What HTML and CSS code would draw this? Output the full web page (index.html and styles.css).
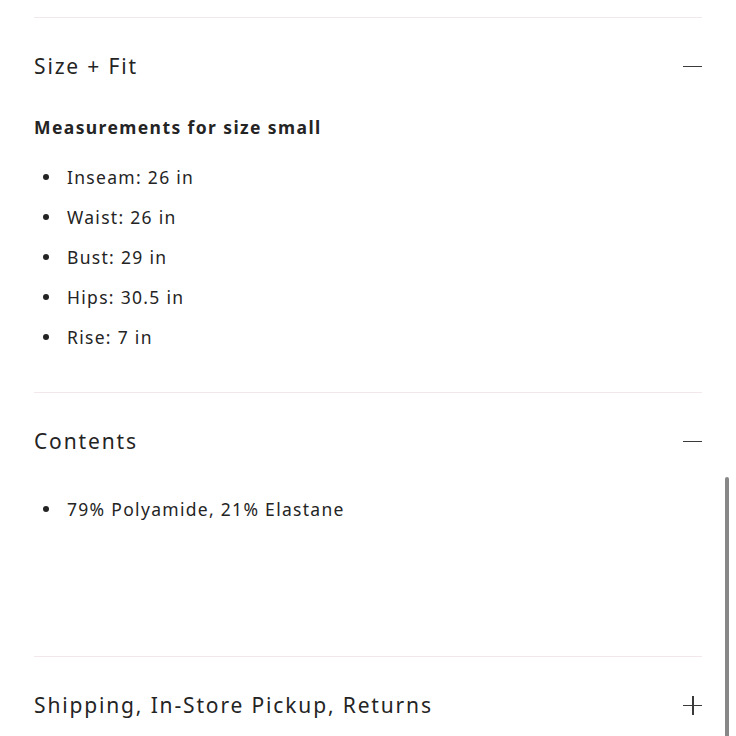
FILE: index.html
```html
<!DOCTYPE html>
<html lang="en">

<head>
  <meta charset="UTF-8" />
  <meta name="viewport" content="width=device-width, initial-scale=1.0" />
  <title>Product details</title>
  <link rel="stylesheet" href="styles.css">
</head>

<body>

  <div class="details">

    <div class="section open">
      <div class="section-head">
        <h2>Size + Fit</h2>
        <span class="toggle minus"></span>
      </div>
      <div class="section-body">
        <h3>Measurements for size small</h3>
        <ul class="specs">
          <li>Inseam: 26 in</li>
          <li>Waist: 26 in</li>
          <li>Bust: 29 in</li>
          <li>Hips: 30.5 in</li>
          <li>Rise: 7 in</li>
        </ul>
      </div>
    </div>

    <div class="section open contents">
      <div class="section-head">
        <h2>Contents</h2>
        <span class="toggle minus"></span>
      </div>
      <div class="section-body">
        <ul class="specs">
          <li>79% Polyamide, 21% Elastane</li>
        </ul>
      </div>
    </div>

    <div class="section">
      <div class="section-head">
        <h2>Shipping, In-Store Pickup, Returns</h2>
        <span class="toggle plus"></span>
      </div>
    </div>

  </div>

  <div class="scrollbar"></div>

</body>

</html>
```

FILE: styles.css
```css
:root {
  --text: #242424;
  --rule: #f2e8ea;
  --icon: #3a3a3a;
}

body {
  margin: 0;
  font-family: 'Noto Sans', sans-serif;
  color: var(--text);
  background: #fff;
  overflow: hidden;
  height: 736px;
}

.details {
  padding: 17px 34px 0;
}

.section {
  border-top: 1px solid var(--rule);
}

.section-head {
  display: flex;
  align-items: center;
  justify-content: space-between;
  padding: 33px 0;
}

.section-head h2 {
  margin: 0;
  font-size: 21px;
  font-weight: 400;
  line-height: 30px;
  letter-spacing: 1.85px;
}

.toggle {
  position: relative;
  width: 19px;
  height: 19px;
}

.toggle::before,
.toggle::after {
  content: "";
  position: absolute;
  background: var(--icon);
}

.toggle::before {
  left: 0;
  right: 0;
  top: 9px;
  height: 1.5px;
}

.toggle.plus::after {
  top: 0;
  bottom: 0;
  left: 9px;
  width: 1.5px;
}

.section-body {
  padding-bottom: 35px;
}

.contents .section-body {
  padding-bottom: 127px;
}

.section-body h3 {
  margin: 0;
  font-size: 17.5px;
  font-weight: 700;
  line-height: 26px;
  letter-spacing: 1.4px;
}

.specs {
  list-style: none;
  margin: 17px 0 0;
  padding: 0;
}

.contents .specs {
  margin-top: 0;
}

.specs li {
  position: relative;
  padding-left: 33px;
  font-size: 17.5px;
  line-height: 40px;
  letter-spacing: 1.3px;
}

.specs li::before {
  content: "";
  position: absolute;
  left: 9px;
  top: 17px;
  width: 6px;
  height: 6px;
  border-radius: 50%;
  background: var(--text);
}

.scrollbar {
  position: absolute;
  right: 7px;
  top: 477px;
  width: 4px;
  height: 270px;
  border-radius: 2px;
  background: #888;
}
```
